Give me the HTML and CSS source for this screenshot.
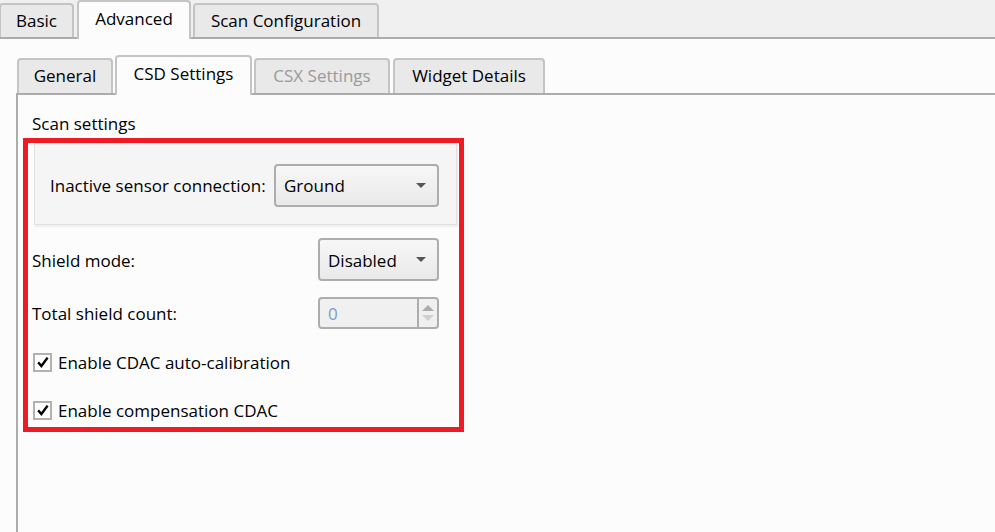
FILE: index.html
```html
<!DOCTYPE html>
<html>
<head>
<meta charset="utf-8">
<link rel="stylesheet" href="styles.css">
</head>
<body>
<div class="tabbar outer-bar">
  <div class="tab t-basic">Basic</div>
  <div class="tab sel t-adv">Advanced</div>
  <div class="tab t-scan">Scan Configuration</div>
</div>
<div class="outer-body">
  <div class="inner">
    <div class="tabbar inner-bar">
      <div class="tab t-general">General</div>
      <div class="tab sel t-csd">CSD Settings</div>
      <div class="tab dis t-csx">CSX Settings</div>
      <div class="tab t-widget">Widget Details</div>
    </div>
    <div class="inner-body">
      <div class="section-title">Scan settings</div>
      <div class="red">
        <div class="group">
          <span class="label">Inactive sensor connection:</span>
          <div class="combo combo-wide">
            <span class="value">Ground</span>
            <svg class="arrow" width="10" height="5" viewBox="0 0 10 5"><path d="M0 0H10L5 5Z" fill="#555"/></svg>
          </div>
        </div>
        <div class="row row-shield">
          <span class="label">Shield mode:</span>
          <div class="combo combo-small">
            <span class="value">Disabled</span>
            <svg class="arrow" width="10" height="5" viewBox="0 0 10 5"><path d="M0 0H10L5 5Z" fill="#555"/></svg>
          </div>
        </div>
        <div class="row row-count">
          <span class="label">Total shield count:</span>
          <div class="spinner">
            <span class="spin-value">0</span>
            <div class="spin-buttons">
              <svg width="12" height="6" viewBox="0 0 12 6"><path d="M0 6L6 0L12 6Z" fill="#ababab"/></svg>
              <svg width="12" height="6" viewBox="0 0 12 6"><path d="M0 0H12L6 6Z" fill="#cfcfcf"/></svg>
            </div>
          </div>
        </div>
        <div class="check check-first">
          <span class="box"><svg width="14" height="14" viewBox="0 0 14 14"><path d="M2.2 7.4L5.4 11L11.6 2.6" fill="none" stroke="#000" stroke-width="2.4"/></svg></span>
          <span class="label">Enable CDAC auto-calibration</span>
        </div>
        <div class="check check-second">
          <span class="box"><svg width="14" height="14" viewBox="0 0 14 14"><path d="M2.2 7.4L5.4 11L11.6 2.6" fill="none" stroke="#000" stroke-width="2.4"/></svg></span>
          <span class="label">Enable compensation CDAC</span>
        </div>
      </div>
    </div>
  </div>
</div>
</body>
</html>
```
FILE: styles.css
```css
* { box-sizing: border-box; }
html, body { margin: 0; height: 100%; }
body {
  background: #f0f0f0;
  font-family: "Open Sans", "Noto Sans", sans-serif;
  font-size: 17px;
  line-height: 22px;
  color: #000;
  display: flex;
  flex-direction: column;
  overflow: hidden;
}
.tabbar { display: flex; align-items: flex-end; flex-shrink: 0; }
.tab {
  border: 2px solid #c4c4c4;
  border-bottom: none;
  border-radius: 4px 4px 0 0;
  background: #e9e9e9;
  padding-top: 5px;
  text-align: center;
  white-space: nowrap;
}
.tab.sel { background: #fcfcfc; margin-bottom: -2px; padding-top: 6px; }
.tab.dis { color: #9a9a9a; }

.outer-bar { height: 39px; border-bottom: 2px solid #acacac; }
.outer-bar .tab { height: 34px; }
.outer-bar .tab.sel { height: 39px; }
.t-basic { margin-left: -1px; width: 75px; }
.t-adv { margin-left: 3px; width: 114px; }
.t-scan { margin-left: 2px; width: 186px; }

.outer-body {
  flex: 1;
  background: #fcfcfc;
  padding-left: 16px;
  display: flex;
  flex-direction: column;
}
.inner { flex: 1; display: flex; flex-direction: column; }
.inner-bar { height: 56px; border-bottom: 2px solid #acacac; }
.inner-bar .tab { height: 35px; }
.inner-bar .tab.sel { height: 40px; }
.t-general { margin-left: 1px; width: 96px; }
.t-csd { margin-left: 2px; width: 137px; }
.t-csx { margin-left: 2px; width: 136px; }
.t-widget { margin-left: 3px; width: 152px; }

.inner-body {
  flex: 1;
  border-left: 2px solid #acacac;
  padding: 18px 0 0 14px;
}
.section-title { height: 22px; }

.red {
  margin-top: 3px;
  margin-left: -9px;
  width: 441px;
  border: 5px solid #ed1c24;
  padding: 0 0 5px 4px;
}
.group {
  margin-left: 2px;
  width: 423px;
  height: 82px;
  background: #f5f5f5;
  border: 1px solid #e0e0e0;
  box-shadow: 1px 2px 1px rgba(0, 0, 0, 0.05);
  display: flex;
  align-items: center;
  justify-content: space-between;
  padding: 2px 17px 0 15px;
}
.label, .value { padding-top: 2px; }
.combo {
  height: 43px;
  border: 2px solid #adadad;
  border-radius: 4px;
  background: linear-gradient(#f7f7f7, #e9e9e9);
  display: flex;
  align-items: center;
  justify-content: space-between;
  padding: 0 11px 0 8px;
}
.combo-wide { width: 165px; }
.combo-small { width: 121px; }
.arrow { display: block; }

.row {
  width: 407px;
  display: flex;
  align-items: center;
  justify-content: space-between;
}
.row-shield { margin-top: 13px; }
.row-count { margin-top: 16px; }

.spinner {
  width: 121px;
  height: 32px;
  border: 2px solid #adadad;
  border-radius: 4px;
  background: #f0f0f0;
  display: flex;
}
.spin-value { flex: 1; padding: 1px 0 0 8px; color: #7b9ccd; line-height: 28px; }
.spin-buttons {
  width: 20px;
  border-left: 2px solid #adadad;
  display: flex;
  flex-direction: column;
  align-items: center;
  justify-content: center;
  gap: 4px;
}
.spin-buttons svg { display: block; }

.check { display: flex; align-items: center; height: 24px; }
.check-first { margin-top: 21px; }
.check-second { margin-top: 24px; }
.box {
  width: 19px;
  height: 19px;
  margin-left: 1px;
  margin-right: 6px;
  border: 2px solid #b2b2b2;
  background: #fff;
  display: flex;
  align-items: center;
  justify-content: center;
}
.box svg { display: block; }
```
